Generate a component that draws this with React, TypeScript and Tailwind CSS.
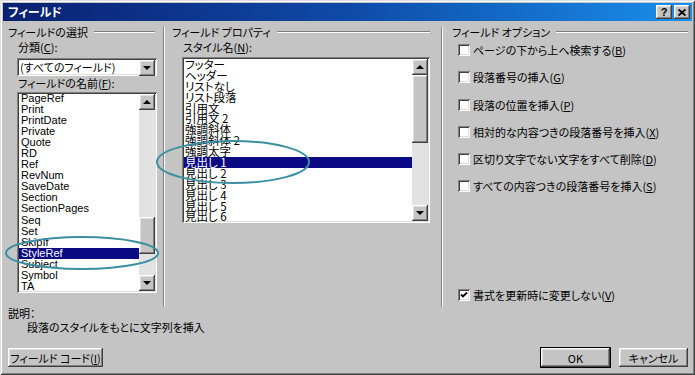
import React from "react";

const RAISED =
  "shadow-[inset_-1px_-1px_0_#404040,inset_1px_1px_0_#ffffff,inset_-2px_-2px_0_#808080,inset_2px_2px_0_#dfdfdf]";
const SUNKEN =
  "shadow-[inset_1px_1px_0_#808080,inset_-1px_-1px_0_#ffffff,inset_2px_2px_0_#404040,inset_-2px_-2px_0_#dfdfdf]";
const JP =
  "font-['Noto_Sans_CJK_JP','Noto_Sans',sans-serif] [font-feature-settings:'palt']";
const LAT = "font-['Liberation_Sans',Arial,sans-serif]";

function Arrow({ up }: { up?: boolean }) {
  return (
    <div
      className={
        up
          ? "w-0 h-0 border-x-[4px] border-x-transparent border-b-[4px] border-b-black"
          : "w-0 h-0 border-x-[4px] border-x-transparent border-t-[4px] border-t-black"
      }
    />
  );
}

function ArrowBtn({ up }: { up?: boolean }) {
  return (
    <div className={`w-[16px] h-[16px] shrink-0 bg-[#c4c4c4] flex items-center justify-center ${RAISED}`}>
      <Arrow up={up} />
    </div>
  );
}

function GroupLabel({ text, mr }: { text: string; mr: string }) {
  return (
    <div className={`flex items-center h-[12px] ${mr}`}>
      <span className={`${JP} text-[11px] leading-[12px] text-black whitespace-nowrap`}>{text}</span>
      <div className="flex-1 ml-[6px] h-[2px] border-t border-t-[#808080] border-b border-b-white" />
    </div>
  );
}

function Label({ children, cls }: { children: React.ReactNode; cls?: string }) {
  return (
    <div className={`${JP} text-[11px] leading-[12px] h-[12px] text-black whitespace-nowrap ${cls ?? ""}`}>
      {children}
    </div>
  );
}

function CheckRow({ text, mn, checked, cls }: { text: string; mn: string; checked?: boolean; cls?: string }) {
  return (
    <div className={`flex items-center h-[14px] ${cls ?? ""}`}>
      <div className={`w-[12px] h-[12px] bg-white shrink-0 flex items-center justify-center ${SUNKEN}`}>
        {checked && (
          <svg width="8" height="8" viewBox="0 0 8 8">
            <path d="M1 3.5 L3 5.5 L7 1.5" stroke="black" strokeWidth="1.8" fill="none" />
          </svg>
        )}
      </div>
      <span className={`${JP} ml-[3px] text-[11px] leading-[12px] text-black whitespace-nowrap`}>
        {text}(<u>{mn}</u>)
      </span>
    </div>
  );
}

function Button({ children, cls }: { children: React.ReactNode; cls: string }) {
  return (
    <div
      className={`${JP} h-[19px] bg-[#c4c4c4] flex items-center justify-center text-[11px] leading-[12px] text-black ${RAISED} ${cls}`}
    >
      {children}
    </div>
  );
}

const leftItems = [
  "PageRef",
  "Print",
  "PrintDate",
  "Private",
  "Quote",
  "RD",
  "Ref",
  "RevNum",
  "SaveDate",
  "Section",
  "SectionPages",
  "Seq",
  "Set",
  "SkipIf",
  "StyleRef",
  "Subject",
  "Symbol",
  "TA",
];

const midItems = [
  "フッター",
  "ヘッダー",
  "リストなし",
  "リスト段落",
  "引用文",
  "引用文 2",
  "強調斜体",
  "強調斜体 2",
  "強調太字",
  "見出し 1",
  "見出し 2",
  "見出し 3",
  "見出し 4",
  "見出し 5",
  "見出し 6",
];

export default function App() {
  return (
    <div
      className={`relative w-[695px] h-[375px] bg-[#c4c4c4] p-[3px] flex flex-col shadow-[inset_1px_1px_0_#dfdfdf,inset_-1px_-1px_0_#404040,inset_2px_2px_0_#ffffff,inset_-2px_-2px_0_#808080] overflow-hidden`}
    >
      {/* Title bar */}
      <div className="h-[18px] shrink-0 flex items-center justify-between bg-linear-to-r from-[#0a2070] via-[#0f4aa8] to-[#1b8fea] pl-[5px] pr-[2px]">
        <span className={`${JP} text-white font-bold text-[12px] leading-[14px]`}>フィールド</span>
        <div className="flex gap-[2px]">
          <div className={`w-[16px] h-[14px] bg-[#c4c4c4] flex items-center justify-center ${RAISED}`}>
            <span className={`${LAT} font-bold text-[11px] leading-[11px] text-black`}>?</span>
          </div>
          <div className={`w-[16px] h-[14px] bg-[#c4c4c4] flex items-center justify-center ${RAISED}`}>
            <svg width="8" height="7" viewBox="0 0 8 7">
              <path d="M0.5 0.5 L7.5 6.5 M7.5 0.5 L0.5 6.5" stroke="black" strokeWidth="1.8" />
            </svg>
          </div>
        </div>
      </div>

      {/* Columns */}
      <div className="flex h-[281px] mt-[5px] pl-[5px] shrink-0">
        {/* Left column */}
        <div className="w-[150px] flex flex-col">
          <GroupLabel text="フィールドの選択" mr="mr-[3px]" />
          <Label cls="ml-[10px] mt-[3px]">
            分類(<u>C</u>):
          </Label>
          <div className={`ml-[9px] mt-[5px] w-[140px] h-[18px] bg-white p-[2px] flex ${SUNKEN}`}>
            <div className={`${JP} flex-1 text-[11px] leading-[14px] pl-[1px] text-black whitespace-nowrap`}>
              (すべてのフィールド)
            </div>
            <ArrowBtn />
          </div>
          <Label cls="ml-[10px] mt-[1px]">
            フィールドの名前(<u>F</u>):
          </Label>
          <div className={`ml-[9px] mt-[3px] w-[140px] h-[201px] bg-white p-[2px] flex ${SUNKEN}`}>
            <div className="flex-1">
              <div className="mt-[-1px]">
                {leftItems.map((it) => (
                  <div
                    key={it}
                    className={`${LAT} text-[11px] leading-[11.05px] h-[11.05px] pl-[2px] whitespace-nowrap ${
                      it === "StyleRef" ? "bg-[#0a0a84] text-white" : "text-black"
                    }`}
                  >
                    {it}
                  </div>
                ))}
              </div>
            </div>
            <div className="w-[16px] flex flex-col bg-[#e2e2e2]">
              <ArrowBtn up />
              <div className="h-[107px]" />
              <div className={`h-[37px] bg-[#c4c4c4] ${RAISED}`} />
              <div className="flex-1" />
              <ArrowBtn />
            </div>
          </div>
        </div>

        {/* Separator */}
        <div className="ml-[5px] w-[2px] border-l border-l-[#808080] border-r border-r-white mt-[1px]" />

        {/* Middle column */}
        <div className="ml-[7px] w-[260px] flex flex-col">
          <GroupLabel text="フィールド プロパティ" mr="mr-[2px]" />
          <Label cls="ml-[11px] mt-[3px]">
            スタイル名(<u>N</u>):
          </Label>
          <div className={`ml-[10px] mt-[4px] w-[248px] h-[166px] bg-white p-[2px] flex ${SUNKEN}`}>
            <div className="flex-1">
              <div>
                {midItems.map((it) => (
                  <div
                    key={it}
                    className={`${JP} text-[11.5px] leading-[10.9px] h-[10.9px] pl-[1px] whitespace-nowrap ${
                      it === "見出し 1" ? "bg-[#0a0a84] text-white" : "text-black"
                    }`}
                  >
                    {it}
                  </div>
                ))}
              </div>
            </div>
            <div className="w-[16px] flex flex-col bg-[#e2e2e2]">
              <ArrowBtn up />
              <div className={`h-[68px] bg-[#c4c4c4] ${RAISED}`} />
              <div className="flex-1" />
              <ArrowBtn />
            </div>
          </div>
        </div>

        {/* Separator */}
        <div className="ml-[9px] w-[2px] border-l border-l-[#808080] border-r border-r-white mt-[1px]" />

        {/* Right column */}
        <div className="ml-[9px] w-[236px] flex flex-col">
          <GroupLabel text="フィールド オプション" mr="mr-0" />
          <div className="pl-[6px] flex flex-col flex-1">
            <CheckRow text="ページの下から上へ検索する" mn="B" cls="mt-[5px]" />
            <CheckRow text="段落番号の挿入" mn="G" cls="mt-[13.3px]" />
            <CheckRow text="段落の位置を挿入" mn="P" cls="mt-[13.3px]" />
            <CheckRow text="相対的な内容つきの段落番号を挿入" mn="X" cls="mt-[13.3px]" />
            <CheckRow text="区切り文字でない文字をすべて削除" mn="D" cls="mt-[13.3px]" />
            <CheckRow text="すべての内容つきの段落番号を挿入" mn="S" cls="mt-[13.3px]" />
            <CheckRow text="書式を更新時に変更しない" mn="V" checked cls="mt-auto mb-[5px]" />
          </div>
        </div>
      </div>

      {/* Description */}
      <Label cls="ml-[5px]">説明：</Label>
      <Label cls="ml-[24px] mt-[2px]">段落のスタイルをもとに文字列を挿入</Label>

      {/* Buttons */}
      <div className="mt-[15px] flex pl-[5px] pr-[4px]">
        <Button cls="w-[95px]">
          フィールド コード(<u>I</u>)
        </Button>
        <div className="flex-1" />
        <Button cls="w-[69px] outline outline-1 outline-black">OK</Button>
        <Button cls="w-[69px] ml-[9px]">キャンセル</Button>
      </div>

      {/* Annotation ellipses */}
      <svg className="absolute left-0 top-0 pointer-events-none" width="695" height="375">
        <ellipse cx="82" cy="253" rx="76" ry="16" fill="none" stroke="#3b8fa2" strokeWidth="2" />
        <ellipse cx="233" cy="162" rx="76" ry="21" fill="none" stroke="#3b8fa2" strokeWidth="2" />
      </svg>
    </div>
  );
}
